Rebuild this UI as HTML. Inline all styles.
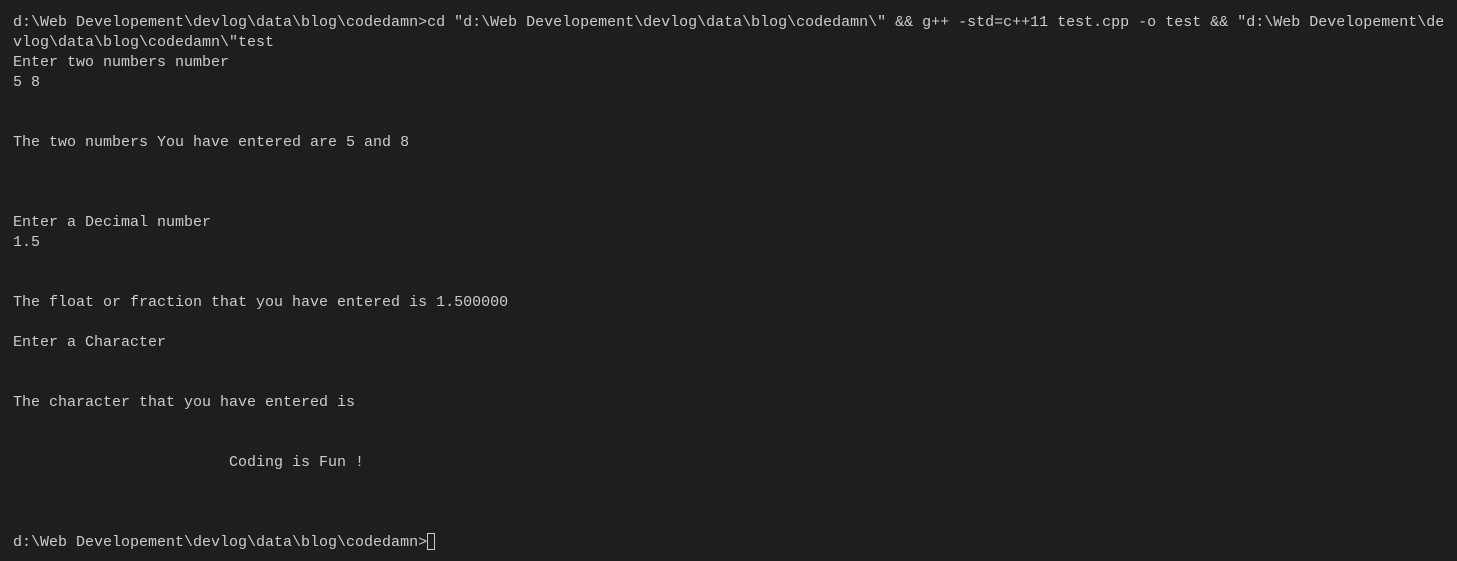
<!DOCTYPE html>
<html><head><style>
html,body{margin:0;padding:0;background:#1e1e1e;width:1457px;height:561px;overflow:hidden}
pre{margin:0;position:absolute;left:13px;top:13px;font-family:"Liberation Mono",monospace;font-size:15px;line-height:20px;color:#cccccc;white-space:pre}
.cur{display:inline-block;width:8px;height:17px;border:1px solid #cccccc;vertical-align:-4px;box-sizing:border-box}
</style></head><body>
<pre>d:\Web Developement\devlog\data\blog\codedamn&gt;cd "d:\Web Developement\devlog\data\blog\codedamn\" &amp;&amp; g++ -std=c++11 test.cpp -o test &amp;&amp; "d:\Web Developement\de
vlog\data\blog\codedamn\"test
Enter two numbers number
5 8


The two numbers You have entered are 5 and 8



Enter a Decimal number
1.5


The float or fraction that you have entered is 1.500000

Enter a Character


The character that you have entered is


                        Coding is Fun !



d:\Web Developement\devlog\data\blog\codedamn&gt;<span class="cur"></span></pre>
</body></html>
